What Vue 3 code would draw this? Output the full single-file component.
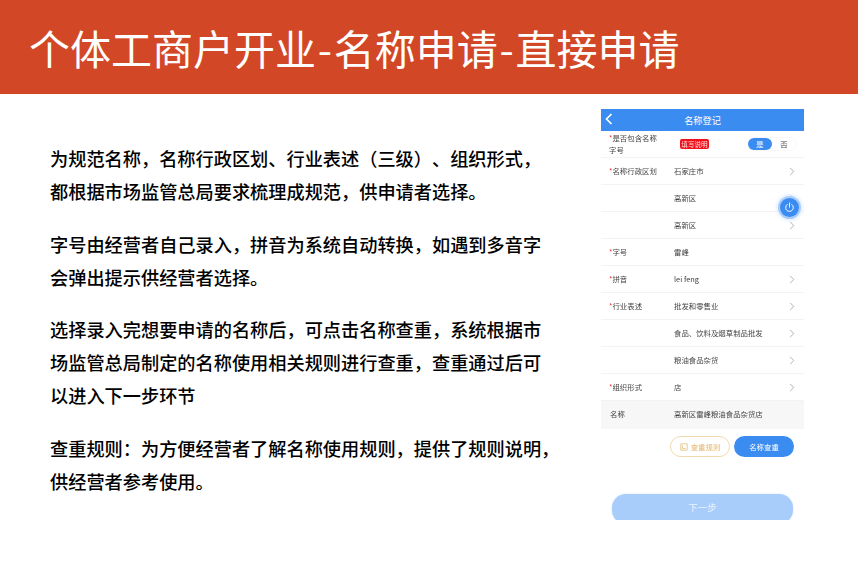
<script setup>
const paragraphs = [
  ['为规范名称，名称行政区划、行业表述（三级）、组织形式，', '都根据市场监管总局要求梳理成规范，供申请者选择。'],
  ['字号由经营者自己录入，拼音为系统自动转换，如遇到多音字', '会弹出提示供经营者选择。'],
  ['选择录入完想要申请的名称后，可点击名称查重，系统根据市', '场监管总局制定的名称使用相关规则进行查重，查重通过后可', '以进入下一步环节'],
  ['查重规则：为方便经营者了解名称使用规则，提供了规则说明，', '供经营者参考使用。'],
]
const rows = [
  { label: '名称行政区划', req: true, value: '石家庄市', arrow: true },
  { label: '', value: '高新区', arrow: true },
  { label: '', value: '高新区', arrow: true },
  { label: '字号', req: true, value: '雷峰', arrow: false },
  { label: '拼音', req: true, value: 'lei feng', arrow: true },
  { label: '行业表述', req: true, value: '批发和零售业', arrow: true },
  { label: '', value: '食品、饮料及烟草制品批发', arrow: true },
  { label: '', value: '粮油食品杂货', arrow: true },
  { label: '组织形式', req: true, value: '店', arrow: true },
]
</script>

<template>
  <div class="page">
    <header class="banner">
      <h1>个体工商户开业<span class="dash">-</span>名称申请<span class="dash">-</span>直接申请</h1>
    </header>
    <main class="content">
      <section class="copy">
        <p v-for="(lines, i) in paragraphs" :key="i" class="para">
          <span v-for="line in lines" :key="line" class="line">{{ line }}</span>
        </p>
      </section>
      <aside class="phone">
        <div class="phone-inner">
          <div class="nav">
            <svg class="back" viewBox="0 0 8 12" width="8" height="12">
              <path d="M6.5 1 L1.5 6 L6.5 11" fill="none" stroke="#fff" stroke-width="1.7" />
            </svg>
            <span>名称登记</span>
          </div>
          <div class="row first">
            <div class="label two"><i>*</i>是否包含名称<br />字号</div>
            <span class="tag">填写说明</span>
            <div class="toggle"><span class="on">是</span><span class="off">否</span></div>
          </div>
          <div v-for="(r, i) in rows" :key="i" class="row">
            <div class="label"><i v-if="r.req">*</i>{{ r.label }}</div>
            <div class="value">{{ r.value }}</div>
            <svg v-if="r.arrow" class="chev" viewBox="0 0 6 10" width="6" height="9">
              <path d="M1 1 L5 5 L1 9" fill="none" stroke="#a0a0a0" stroke-width="0.9" />
            </svg>
          </div>
          <div class="row name">
            <div class="label plain">名称</div>
            <div class="value">高新区雷峰粮油食品杂货店</div>
          </div>
          <div class="actions">
            <div class="btn ghost">
              <svg viewBox="0 0 10 10" width="8" height="8">
                <path d="M1 1 H9 V9 H1 Z M3 3 V7 H7" fill="none" stroke="#e2b66c" stroke-width="0.9" />
              </svg>
              <span>查重规则</span>
            </div>
            <div class="btn solid">名称查重</div>
          </div>
          <div class="next">下一步</div>
        </div>
        <div class="power">
          <svg viewBox="0 0 12 12" width="11" height="11">
            <path d="M3.6 2.6 A4.2 4.2 0 1 0 8.4 2.6 M6 1 V5.6" fill="none" stroke="#fff" stroke-width="1" stroke-linecap="round" />
          </svg>
        </div>
      </aside>
    </main>
  </div>
</template>

<style scoped>
.page {
  width: 858px;
  height: 564px;
  background: #fff;
  overflow: hidden;
  font-family: "Noto Sans CJK SC", sans-serif;
}
.banner {
  height: 94px;
  background: #d24726;
  display: flex;
  align-items: center;
  padding: 0 0 0 29px;
  box-sizing: border-box;
}
.banner h1 {
  margin: 0;
  color: #fff;
  font-size: 41px;
  font-weight: 400;
  line-height: 1;
  white-space: nowrap;
}
.dash {
  margin: 0 1.75px;
}
.content {
  display: flex;
  justify-content: space-between;
}
.copy {
  padding: 48px 0 0 50px;
}
.para {
  margin: 0 0 19.5px;
  color: #000;
  font-size: 18.2px;
  font-weight: 500;
  line-height: 33px;
  white-space: nowrap;
  text-spacing-trim: space-all;
}
.line {
  display: block;
}
.phone {
  position: relative;
  width: 203px;
  height: 411px;
  margin: 15px 54px 0 0;
}
.phone-inner {
  height: 100%;
  overflow: hidden;
  filter: blur(0.35px);
  font-size: 7.4px;
  color: #444;
  text-spacing-trim: space-all;
}
.nav {
  height: 22px;
  background: #3b8cf0;
  color: #fff;
  font-size: 9.2px;
  padding-bottom: 1px;
  box-sizing: border-box;
  display: flex;
  align-items: center;
  justify-content: center;
  position: relative;
}
.back {
  position: absolute;
  left: 4px;
  top: 4px;
}
.row {
  height: 27px;
  box-sizing: border-box;
  display: flex;
  align-items: center;
  border-bottom: 1px solid #f3f3f3;
  padding: 0 9px 0 8px;
}
.label {
  width: 65px;
  flex: none;
  padding-bottom: 2px;
}
.label i {
  color: #e33;
  font-style: normal;
}
.label.two {
  line-height: 12px;
  padding-bottom: 0;
}
.label.plain {
  padding-left: 1px;
  width: 64px;
  box-sizing: content-box;
  padding-bottom: 3px;
}
.value {
  flex: 1;
  padding-bottom: 2px;
}
.name .value {
  padding-bottom: 3px;
}
.chev {
  flex: none;
}
.tag {
  margin-left: 6px;
  width: 29px;
  height: 10px;
  line-height: 10px;
  background: #f0101c;
  color: #ffd9d9;
  border-radius: 2px;
  text-align: center;
  font-size: 6.6px;
  white-space: nowrap;
}
.toggle {
  margin-left: auto;
  width: 48px;
  height: 12px;
  margin-right: -1px;
  border-radius: 6px;
  display: flex;
  box-shadow: 0 0 0 0.5px #f0f0f0;
  line-height: 12px;
  text-align: center;
}
.toggle .on {
  width: 24px;
  background: #3b8cf0;
  color: #fff;
  border-radius: 6px;
}
.toggle .off {
  width: 24px;
}
.name {
  background: #f7f7f7;
  height: 28px;
  border-bottom: 0;
}
.actions {
  display: flex;
  justify-content: flex-end;
  gap: 4px;
  padding: 7px 10px 0 0;
}
.btn {
  width: 60px;
  height: 21px;
  box-sizing: border-box;
  border-radius: 11px;
  display: flex;
  align-items: center;
  justify-content: center;
  gap: 3px;
}
.ghost {
  border: 1px solid #f0d9ad;
  color: #e2b66c;
}
.solid {
  background: #3b8cf0;
  color: #fff;
}
.next {
  margin: 37px 11px 0;
  height: 30px;
  border-radius: 14px;
  background: #a9cdfb;
  color: #eaf3ff;
  font-size: 9.5px;
  text-align: center;
  line-height: 26px;
  box-shadow: 0 0 2px #cfe2fd;
}
.power {
  position: absolute;
  left: 179px;
  top: 89px;
  width: 19px;
  height: 19px;
  border-radius: 50%;
  background: #3b8cf0;
  box-shadow: 0 0 0 2px #a9cdfb, 0 0 4px 3px #d7e7fd;
  display: flex;
  align-items: center;
  justify-content: center;
}
</style>
